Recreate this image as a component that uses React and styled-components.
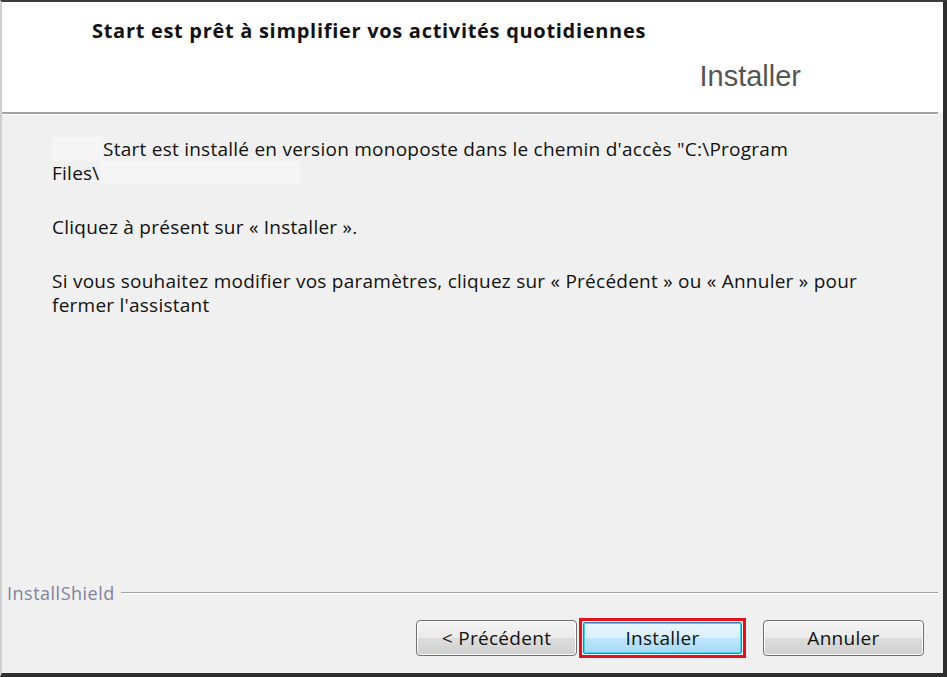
import React from "react";
import styled, { createGlobalStyle } from "styled-components";

const font = `"Open Sans", "Noto Sans", "DejaVu Sans", sans-serif`;

const GlobalStyle = createGlobalStyle`
  * { box-sizing: border-box; }
  html, body { margin: 0; padding: 0; background: #f0f0f0; }
`;

const Window = styled.div`
  width: 947px;
  height: 677px;
  display: flex;
  flex-direction: column;
  border-top: 2px solid #3c3c3c;
  border-left: 2px solid #cfcfcf;
  border-right: 4px solid #2e2e2e;
  border-bottom: 4px solid #2e2e2e;
  background: #f0f0f0;
  font-family: ${font};
  overflow: hidden;
`;

const Header = styled.div`
  height: 110px;
  background: #ffffff;
  display: flex;
  flex-direction: column;
  padding: 15px 0 0 90px;
`;

const Title = styled.h1`
  margin: 0;
  font-size: 20px;
  line-height: 28px;
  font-weight: 700;
  color: #111;
  letter-spacing: 0.7px;
`;

const Subtitle = styled.div`
  align-self: flex-end;
  margin: 15px 142px 0 0;
  font-family: "Liberation Sans", Arial, sans-serif;
  font-size: 29px;
  color: #555;
`;

const Separator = styled.div`
  height: 3px;
  margin-right: 5px;
  border-top: 2px solid #a4a4a4;
  border-bottom: 1px solid #ffffff;
`;

const Body = styled.div`
  flex: 1;
  padding: 22px 66px 0 50px;
  font-size: 19px;
  letter-spacing: 0.25px;
  line-height: 24px;
  color: #111;
`;

const Paragraph = styled.p`
  margin: 0 0 30px;
`;

const NoWrap = styled.span`
  white-space: nowrap;
`;

const Blank = styled.span`
  display: inline-block;
  vertical-align: top;
  width: ${(p) => p.w}px;
  height: 24px;
  background: #f5f5f5;
`;

const Footer = styled.div`
  display: flex;
  flex-direction: column;
  padding: 0 0 15px 0;
`;

const BrandRow = styled.div`
  display: flex;
  align-items: center;
  gap: 6px;
  padding: 0 5px 0 5px;
  height: 20px;
`;

const Brand = styled.span`
  font-size: 18px;
  letter-spacing: 0.5px;
  color: #82829a;
`;

const BrandLine = styled.div`
  flex: 1;
  height: 2px;
  border-top: 1px solid #a0a0a0;
  border-bottom: 1px solid #ffffff;
`;

const Buttons = styled.div`
  display: flex;
  justify-content: flex-end;
  align-items: center;
  margin-top: 15px;
  padding-right: 19px;
`;

const Button = styled.button`
  width: 161px;
  height: 36px;
  border: 1px solid #707070;
  border-radius: 4px;
  background: linear-gradient(#f3f3f3 0%, #ebebeb 48%, #dddddd 52%, #cfcfcf 100%);
  box-shadow: inset 0 0 0 1px #fcfcfc;
  font-family: ${font};
  font-size: 19px;
  letter-spacing: 0.3px;
  color: #111;
  padding: 0;
`;

const Focus = styled.div`
  border: 3px solid #e0121b;
  padding: 1px;
  margin: 0 17px 0 2px;
`;

const PrimaryButton = styled(Button)`
  width: 159px;
  height: 32px;
  border-color: #3c7fb1;
  border-radius: 2px;
  background: linear-gradient(#eaf6fd 0%, #d9f0fc 48%, #bee6fd 52%, #a7d9f5 100%);
  box-shadow: inset 0 0 0 1px #48d0f5;
`;

export default function App() {
  return (
    <>
      <GlobalStyle />
      <Window>
        <Header>
          <Title>Start est prêt à simplifier vos activités quotidiennes</Title>
          <Subtitle>Installer</Subtitle>
        </Header>
        <Separator />
        <Body>
          <Paragraph>
            <Blank w={51} />
            Start est installé en version monoposte dans le chemin d'accès "C:\Program{" "}
            <NoWrap>
              Files\
              <Blank w={200} />
            </NoWrap>
          </Paragraph>
          <Paragraph>Cliquez à présent sur « Installer ».</Paragraph>
          <Paragraph>
            Si vous souhaitez modifier vos paramètres, cliquez sur « Précédent » ou « Annuler » pour
            fermer l'assistant
          </Paragraph>
        </Body>
        <Footer>
          <BrandRow>
            <Brand>InstallShield</Brand>
            <BrandLine />
          </BrandRow>
          <Buttons>
            <Button>&lt; Précédent</Button>
            <Focus>
              <PrimaryButton>Installer</PrimaryButton>
            </Focus>
            <Button>Annuler</Button>
          </Buttons>
        </Footer>
      </Window>
    </>
  );
}
